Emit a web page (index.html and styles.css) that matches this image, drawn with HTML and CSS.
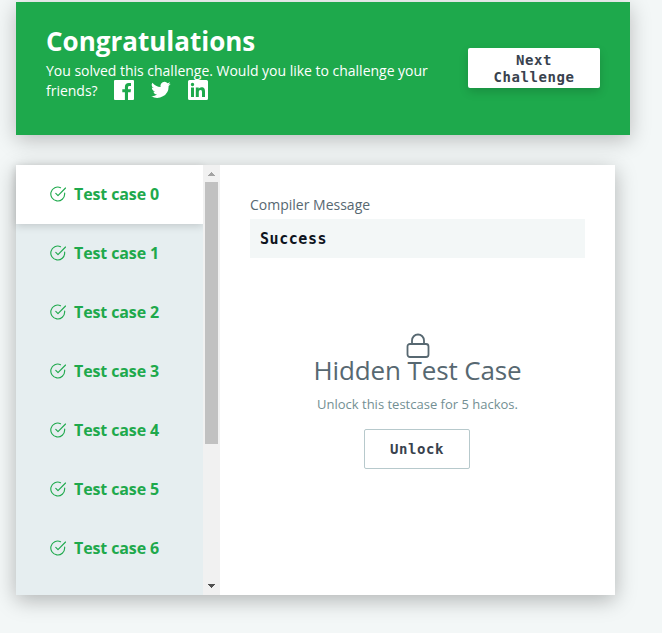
FILE: index.html
```html
<!DOCTYPE html>
<html lang="en">
<head>
<meta charset="utf-8">
<title>Congratulations</title>
<link rel="stylesheet" href="styles.css">
</head>
<body>
<svg class="defs" width="0" height="0" aria-hidden="true">
  <symbol id="check" viewBox="0 0 24 24"><path d="M22 10.500V12a10.400 10.400 0 1 1-6.200-9.500M23.300 3 12 14.500l-3.300-3.300" fill="none" stroke="currentColor" stroke-width="1.700" stroke-linecap="round" stroke-linejoin="round"/></symbol>
</svg>
<section class="banner">
  <div class="message">
    <h1>Congratulations</h1>
    <p>You solved this challenge. Would you like to challenge your friends?<span class="social"><svg viewBox="0 0 20 20"><path fill-rule="evenodd" d="M1 0h18a1 1 0 0 1 1 1v18a1 1 0 0 1-1 1h-5v-7.700h2.600l.4-3h-3V7.400c0-.9.300-1.500 1.500-1.500H17V3.200c-.3 0-1.200-.1-2.300-.1-2.300 0-3.800 1.400-3.800 3.900v2.300H8.300v3h2.600V20H1a1 1 0 0 1-1-1V1a1 1 0 0 1 1-1z"/></svg><svg viewBox="0 0 24 24"><path d="M23.600 4.600a9.600 9.600 0 0 1-2.800.8 4.800 4.800 0 0 0 2.100-2.700 9.700 9.700 0 0 1-3 1.200 4.800 4.800 0 0 0-8.300 4.400A13.700 13.700 0 0 1 1.700 3.200a4.800 4.800 0 0 0 1.500 6.500 4.800 4.800 0 0 1-2.200-.6c0 2.300 1.600 4.300 3.900 4.800a4.900 4.900 0 0 1-2.200.1 4.800 4.800 0 0 0 4.500 3.300A9.700 9.700 0 0 1 0 19.300a13.700 13.700 0 0 0 21.100-12.200 10 10 0 0 0 2.500-2.500z"/></svg><svg viewBox="0 0 20 20"><path fill-rule="evenodd" d="M1.500 0h17A1.500 1.500 0 0 1 20 1.500v17a1.500 1.500 0 0 1-1.500 1.500h-17A1.500 1.500 0 0 1 0 18.500v-17A1.500 1.500 0 0 1 1.500 0zM3 7.500V17h3V7.500zM4.500 2.800a1.700 1.700 0 1 0 0 3.400 1.700 1.700 0 0 0 0-3.400zM7.800 7.500V17h3v-4.700c0-1.200.2-2.400 1.700-2.400s1.500 1.400 1.500 2.500V17h3v-5.200c0-2.600-.6-4.500-3.500-4.500-1.400 0-2.400.8-2.800 1.500V7.500z"/></svg></span></p>
  </div>
  <button class="next">Next Challenge</button>
</section>
<section class="results">
  <ul class="cases">
    <li class="active"><svg><use href="#check"/></svg>Test case 0</li>
    <li><svg><use href="#check"/></svg>Test case 1</li>
    <li><svg><use href="#check"/></svg>Test case 2</li>
    <li><svg><use href="#check"/></svg>Test case 3</li>
    <li><svg><use href="#check"/></svg>Test case 4</li>
    <li><svg><use href="#check"/></svg>Test case 5</li>
    <li><svg><use href="#check"/></svg>Test case 6</li>
  </ul>
  <div class="scrollbar">
    <svg class="up" viewBox="0 0 17 17" shape-rendering="crispEdges"><path d="M8 7h1v1h1v1h1v1h1v1H5v-1h1V9h1V8h1z"/></svg>
    <div class="thumb"></div>
    <svg class="down" viewBox="0 0 17 17" shape-rendering="crispEdges"><path d="M5 6h7v1h-1v1h-1v1H9v1H8V9H7V8H6V7H5z"/></svg>
  </div>
  <div class="detail">
    <h2>Compiler Message</h2>
    <div class="output">Success</div>
    <div class="locked">
      <svg class="lock" viewBox="0 0 24 26"><path d="M6 11V7.500a6 6 0 0 1 12 0V11M4 11h16a2.500 2.500 0 0 1 2.500 2.500v8A2.500 2.500 0 0 1 20 24H4a2.500 2.500 0 0 1-2.500-2.500v-8A2.500 2.500 0 0 1 4 11z" fill="none" stroke="currentColor" stroke-width="1.800"/></svg>
      <h3>Hidden Test Case</h3>
      <p>Unlock this testcase for 5 hackos.</p>
      <button class="unlock">Unlock</button>
    </div>
  </div>
</section>
</body>
</html>
```
FILE: styles.css
```css
* { box-sizing: border-box; }
body {
  margin: 0;
  padding: 2px 16px 0;
  height: 633px;
  overflow: hidden;
  background: #f3f7f7;
  font-family: "Open Sans", sans-serif;
}
.defs { position: absolute; }
h1, h2, h3, p, ul { margin: 0; padding: 0; font-weight: 400; }
button {
  border: 0;
  padding: 0;
  border-radius: 2px;
  background: #fff;
  color: #39424e;
  font: 700 14px/17px "DejaVu Sans Mono", monospace;
  letter-spacing: .57px;
}
.banner {
  display: flex;
  justify-content: space-between;
  width: 614px;
  height: 133px;
  padding: 24px 30px;
  background: #1ea94c;
  color: #fff;
  box-shadow: 0 5px 20px rgba(0, 0, 0, .24);
}
.message { width: 392px; }
.message h1 { font-size: 26px; line-height: 31px; font-weight: 700; }
.message p { margin-top: 4px; font-size: 14px; line-height: 20px; letter-spacing: -.015px; }
.social { display: inline-flex; gap: 17px; margin-left: 16px; vertical-align: -4px; height: 20px; margin-top: -1px; }
.social svg { width: 20px; height: 20px; fill: #fff; }
.next { width: 132px; height: 40px; margin-top: 22px; padding: 1px 20px 0; box-shadow: 0 4px 10px rgba(0, 0, 0, .15); }
.results {
  display: flex;
  width: 599px;
  height: 430px;
  margin-top: 30px;
  background: #fff;
  box-shadow: 0 5px 20px rgba(0, 0, 0, .28);
}
.cases { width: 187px; list-style: none; background: #e6eef0; }
.cases li {
  display: flex;
  align-items: center;
  height: 59px;
  padding: 0 0 2px 34px;
  color: #1ea94c;
  font-size: 16px;
  font-weight: 700;
  letter-spacing: -.12px;
}
.cases svg { width: 16px; height: 16px; margin-right: 8px; }
.cases .active { background: #fff; box-shadow: 0 2px 8px rgba(0, 0, 0, .16); }
.scrollbar {
  display: flex;
  flex-direction: column;
  width: 17px;
  background: #f1f1f1;
  position: relative;
}
.scrollbar svg { width: 17px; height: 17px; }
.up { fill: #a3a3a3; }
.down { margin-top: auto; fill: #505050; }
.thumb { width: 13px; height: 262px; margin-left: 2px; background: #c1c1c1; }
.detail { flex: 1; padding: 30px; }
.detail h2 { font-size: 14px; line-height: 20px; color: #576871; }
.output {
  height: 39px;
  margin-top: 4px;
  padding: 0 10px;
  background: #f3f7f7;
  color: #0e141e;
  font: 700 15px/40px "DejaVu Sans Mono", monospace;
  letter-spacing: .55px;
}
.locked { display: flex; flex-direction: column; align-items: center; margin-top: 75px; }
.lock { width: 24px; height: 26px; color: #576871; }
.locked h3 { margin-top: -7px; font-size: 26px; line-height: 36px; color: #576871; letter-spacing: -.12px; }
.locked p { margin-top: 6px; font-size: 13px; line-height: 20px; color: #738f93; }
.unlock { width: 106px; height: 40px; margin: 15px 1px 0 0; border: 1px solid #b7c9cc; }
```
